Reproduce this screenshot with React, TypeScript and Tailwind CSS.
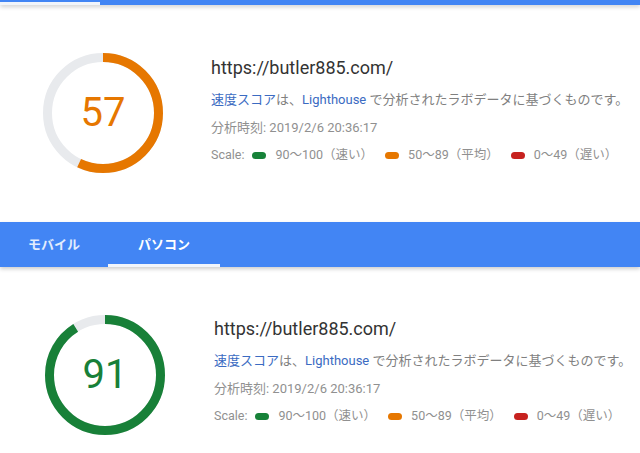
import React from 'react';

const FONT = { fontFamily: 'Roboto, "Noto Sans CJK JP", sans-serif' };

const Gauge = ({ score, color }: { score: number; color: string }) => {
  const r = 55.5;
  const c = 2 * Math.PI * r;
  return (
    <div className="relative w-[120px] h-[120px] shrink-0">
      <svg width="120" height="120" viewBox="0 0 120 120" className="-rotate-90">
        <circle cx="60" cy="60" r={r} fill="none" stroke="#e8eaed" strokeWidth="9" />
        <circle
          cx="60"
          cy="60"
          r={r}
          fill="none"
          stroke={color}
          strokeWidth="9"
          strokeDasharray={`${(c * score) / 100} ${c}`}
        />
      </svg>
      <div className="absolute inset-0 flex items-center justify-center text-[40px] leading-none" style={{ color }}>
        {score}
      </div>
    </div>
  );
};

const Legend = ({ dot, label }: { dot: string; label: string }) => (
  <div className="flex items-center gap-[9px] mr-[12px]">
    <span className={`w-[14px] h-[7px] rounded-full ${dot}`} />
    <span>{label}</span>
  </div>
);

const Summary = () => (
  <div className="flex flex-col">
    <div className="text-[18px] leading-[24px] text-[#333]">https://butler885.com/</div>
    <div className="mt-[10px] text-[13px] leading-[20px] text-[#808080] whitespace-nowrap">
      <span className="text-[#3b6bc2]">速度スコア</span>は、<span className="text-[#3b6bc2]">Lighthouse</span> で分析されたラボデータに基づくものです。
    </div>
    <div className="mt-[8px] text-[13px] leading-[20px] text-[#909090]">分析時刻: 2019/2/6 20:36:17</div>
    <div className="mt-[7px] flex items-center text-[12.5px] leading-[20px] text-[#909090] whitespace-nowrap">
      <span className="mr-[8px]">Scale:</span>
      <Legend dot="bg-[#178239]" label="90〜100（速い）" />
      <Legend dot="bg-[#e67700]" label="50〜89（平均）" />
      <Legend dot="bg-[#c7221f]" label="0〜49（遅い）" />
    </div>
  </div>
);

export default function App() {
  return (
    <div className="w-[640px] h-[453px] overflow-hidden bg-white flex flex-col" style={FONT}>
      {/* previous tab bar, cut off at the top */}
      <div className="h-[5px] bg-[#4285f4] flex items-end shadow-[0_2px_4px_rgba(0,0,0,0.18)] relative z-10">
        <div className="w-[100px] h-[3px] bg-[#f1f5fb]" />
      </div>

      <div className="h-[217px] flex items-start pl-[43px] pt-[48px]">
        <Gauge score={57} color="#e67700" />
        <div className="ml-[48px] mt-[3px]">
          <Summary />
        </div>
      </div>

      {/* tabs */}
      <div className="h-[45px] bg-[#4285f4] flex items-stretch text-white text-[13px] font-bold shadow-[0_2px_4px_rgba(0,0,0,0.2)] relative z-10">
        <div className="w-[108px] flex items-center justify-center text-white/85">モバイル</div>
        <div className="w-[112px] flex items-center justify-center relative">
          パソコン
          <span className="absolute left-0 right-0 bottom-0 h-[3px] bg-[#f1f5fb]" />
        </div>
      </div>

      <div className="flex items-start pl-[45px] pt-[48px]">
        <Gauge score={91} color="#188038" />
        <div className="ml-[49px] mt-[2px]">
          <Summary />
        </div>
      </div>
    </div>
  );
}
